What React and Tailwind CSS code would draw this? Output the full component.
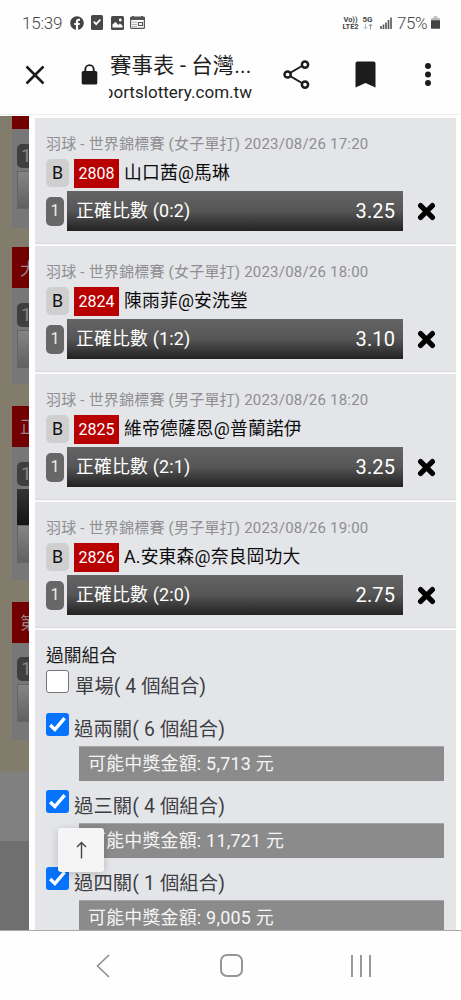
import React from "react";
import { FaFacebook } from "react-icons/fa";

const bets = [
  {
    title: "羽球 - 世界錦標賽 (女子單打) 2023/08/26 17:20",
    code: "2808",
    teams: "山口茜@馬琳",
    pick: "正確比數 (0:2)",
    odds: "3.25",
  },
  {
    title: "羽球 - 世界錦標賽 (女子單打) 2023/08/26 18:00",
    code: "2824",
    teams: "陳雨菲@安洗瑩",
    pick: "正確比數 (1:2)",
    odds: "3.10",
  },
  {
    title: "羽球 - 世界錦標賽 (男子單打) 2023/08/26 18:20",
    code: "2825",
    teams: "維帝德薩恩@普蘭諾伊",
    pick: "正確比數 (2:1)",
    odds: "3.25",
  },
  {
    title: "羽球 - 世界錦標賽 (男子單打) 2023/08/26 19:00",
    code: "2826",
    teams: "A.安東森@奈良岡功大",
    pick: "正確比數 (2:0)",
    odds: "2.75",
  },
];

const combos = [
  { label: "過兩關( 6 個組合)", prize: "可能中獎金額: 5,713 元" },
  { label: "過三關( 4 個組合)", prize: "可能中獎金額: 11,721 元" },
  { label: "過四關( 1 個組合)", prize: "可能中獎金額: 9,005 元" },
];

function StatusBar() {
  return (
    <div className="flex h-[45px] items-center pl-[22px] pr-[21px] text-[#454545]">
      <span className="w-[48px] text-[17px] font-light leading-5 tracking-[-0.2px]">15:39</span>
      <FaFacebook size={14} color="#444" />
      <svg className="ml-[7px]" width="12" height="15" viewBox="0 0 12 15">
        <rect width="12" height="15" rx="1.5" fill="#484848" />
        <path d="M2.8 6.6l2.4 2.5 4.2-4.6" stroke="#fff" strokeWidth="1.8" fill="none" />
      </svg>
      <svg className="ml-2" width="13" height="14" viewBox="0 0 13 14">
        <rect width="13" height="14" rx="1.5" fill="#484848" />
        <path d="M1.5 11.5V8.5l3-2.6 2.8 3 1.6-1.5 2.6 2v2.1z" fill="#fff" />
        <circle cx="9.3" cy="4" r="1.4" fill="#fff" />
      </svg>
      <svg className="ml-[6px]" width="15" height="13" viewBox="0 0 15 13">
        <rect x="0.6" y="1.2" width="13.8" height="11.2" rx="1" fill="#fff" stroke="#555" strokeWidth="1.2" />
        <path d="M0 1h15v3H0zM2 0h2v2H2zM11 0h2v2h-2z" fill="#555" />
        <path d="M2 6.2h5M2 8.4h5M2 10.4h5" stroke="#aaa" />
        <path d="M8.5 6.5h4v3h-4z" fill="#fff" stroke="#555" strokeWidth="1.2" />
      </svg>
      <div className="ml-auto flex items-center">
        <div className="w-[19px] text-center text-[7.5px] font-bold leading-[7px] tracking-[-0.1px]">
          <div>Vo))</div>
          <div>LTE2</div>
        </div>
        <div className="mx-[1px] w-[13px] text-center text-[8px] font-bold leading-[7px]">
          <div>5G</div>
          <svg className="mx-auto" width="10" height="7" viewBox="0 0 10 7">
            <path d="M2.5 0.5v5M0.8 4l1.7 2 1.7-2" stroke="#bbb" fill="none" />
            <path d="M7.5 6.5v-5M5.8 3l1.7-2 1.7 2" stroke="#999" fill="none" />
          </svg>
        </div>
        <svg className="ml-[5px]" width="12" height="12" viewBox="0 0 12 12">
          <path d="M1 12V9M3.5 12V7.5M6 12V5.5M8.5 12V3M11 12V0.5" stroke="#555" strokeWidth="1.6" />
        </svg>
        <span className="ml-[5px] w-[34px] text-[17px] font-light leading-5 tracking-[-0.4px]">75%</span>
        <svg width="9" height="13" viewBox="0 0 10 14">
          <path d="M3 0h4v2h2a1 1 0 0 1 1 1v2H0V3a1 1 0 0 1 1-1h2z" fill="#bbb" />
          <path d="M0 4.5h10V13a1 1 0 0 1-1 1H1a1 1 0 0 1-1-1z" fill="#444" />
        </svg>
      </div>
    </div>
  );
}

function Toolbar() {
  return (
    <div className="flex h-[70px] items-start border-b border-[#eee] text-[#1f1f1f]">
      <svg className="ml-[25px] mt-5" width="20" height="20" viewBox="0 0 20 20">
        <path d="M1.5 1.5l17 17M18.5 1.5l-17 17" stroke="#1c1c1c" strokeWidth="2.5" />
      </svg>
      <svg className="ml-[36px] mt-[19px]" width="17" height="21" viewBox="0 0 17 21">
        <rect x="0.7" y="7" width="15.6" height="13.5" rx="1.6" fill="#1c1c1c" />
        <path d="M4.3 8V5.3a4.2 4.2 0 0 1 8.4 0V8" stroke="#1c1c1c" strokeWidth="1.9" fill="none" />
      </svg>
      <div className="ml-[11px] mt-[9px] flex w-[144px] flex-col">
        <span className="ml-[1px] whitespace-nowrap text-[21.4px] leading-6 tracking-[0.1px]">
          賽事表 - 台灣...
        </span>
        <div className="mt-[2px] flex w-[143px] justify-end overflow-hidden">
          <span className="whitespace-nowrap text-[17px] leading-6 tracking-[0.03px]">
            sportslottery.com.tw
          </span>
        </div>
      </div>
      <svg className="ml-[30px] mt-[15px]" width="28" height="30" viewBox="0 0 28 30">
        <path d="M21.5 4.5L4.5 14.5l17 10" stroke="#1c1c1c" strokeWidth="2" fill="none" />
        <circle cx="22" cy="4.6" r="3.1" fill="#fff" stroke="#1c1c1c" strokeWidth="2.5" />
        <circle cx="4.6" cy="14.5" r="3.1" fill="#fff" stroke="#1c1c1c" strokeWidth="2.5" />
        <circle cx="22" cy="24.6" r="3.1" fill="#fff" stroke="#1c1c1c" strokeWidth="2.5" />
      </svg>
      <svg className="ml-[44px] mt-4" width="21" height="27" viewBox="0 0 21 27">
        <path d="M2.5 0.5h16a2 2 0 0 1 2 2v24L10.5 22 0.5 26.5v-24a2 2 0 0 1 2-2z" fill="#1c1c1c" />
      </svg>
      <svg className="ml-[48px] mt-[17px]" width="8" height="25" viewBox="0 0 8 25">
        <circle cx="4" cy="4" r="3" fill="#1c1c1c" />
        <circle cx="4" cy="12.5" r="3" fill="#1c1c1c" />
        <circle cx="4" cy="21" r="3" fill="#1c1c1c" />
      </svg>
    </div>
  );
}

function Badge() {
  return (
    <div className="ml-[5px] h-6 w-5 shrink-0 rounded-[5px] bg-[#3f3f3f] pl-[4px] text-[19px] leading-6 text-[#858585]">
      1
    </div>
  );
}

function Light({ className }) {
  return (
    <div
      className={`ml-[5px] w-5 shrink-0 border border-[#656565] bg-linear-to-b from-[#858585] to-[#616161] ${className}`}
    />
  );
}

// dimmed page behind the drawer
function Backdrop() {
  return (
    <div className="flex h-full w-[29px] shrink-0 flex-col overflow-hidden bg-[#817c6b]">
      <div className="ml-3 flex h-[656px] w-[17px] shrink-0 flex-col overflow-hidden">
        <div className="h-[13px] shrink-0 bg-[#720000]" />
        <div className="mb-[19px] flex h-[99px] shrink-0 flex-col bg-[#777] pt-[15px]">
          <Badge />
          <Light className="mt-[3px] h-[38px]" />
        </div>
        <div className="h-[41px] shrink-0 whitespace-nowrap bg-[#720000] pl-[8px] text-[17.6px] leading-[44px] text-[#9a8585]">
          大
        </div>
        <div className="mb-[22px] flex h-[96px] shrink-0 flex-col bg-[#777] pt-[15px]">
          <Badge />
          <Light className="mt-[3px] h-[38px]" />
        </div>
        <div className="h-[41px] shrink-0 whitespace-nowrap bg-[#720000] pl-[8px] text-[17.6px] leading-[42px] text-[#9a8585]">
          正
        </div>
        <div className="mb-[22px] flex h-[133px] shrink-0 flex-col bg-[#777] pt-[15px]">
          <Badge />
          <div className="ml-[5px] mt-[3px] h-[36px] w-5 bg-linear-to-b from-[#343434] to-[#151515]" />
          <Light className="h-[38px]" />
        </div>
        <div className="h-[41px] shrink-0 whitespace-nowrap bg-[#720000] pl-[8px] text-[17.6px] leading-[42px] text-[#9a8585]">
          第
        </div>
        <div className="flex h-[97px] shrink-0 flex-col bg-[#777] pt-[14px]">
          <Badge />
          <Light className="mt-[3px] h-[38px]" />
        </div>
      </div>
      <div className="h-[69px] shrink-0 bg-[#808080]" />
      <div className="h-[90px] shrink-0 bg-[#6f6f6f]" />
    </div>
  );
}

function Bet({ bet }) {
  return (
    <div className="h-[128px] w-[421px] shrink-0 border-b-2 border-[#fbfbfb] pl-[11px] pt-[15px] shadow-[inset_0_-1px_0_#dadadc]">
      <div className="h-[25px] whitespace-nowrap text-[15px] leading-[22px] tracking-[0.21px] text-[#8e8e90]">
        {bet.title}
      </div>
      <div className="flex h-[29px] items-center">
        <span className="h-[28px] w-[23px] rounded-[5px] bg-[#cfcfcf] pl-[6px] text-[17.8px] leading-[28px] text-[#111]">
          B
        </span>
        <span className="ml-[5px] mt-[1px] h-[29px] w-[45px] bg-[#b80000] text-center text-[16px] leading-[29px] text-white">
          {bet.code}
        </span>
        <span className="ml-[5px] whitespace-nowrap text-[17.8px] leading-[28px] tracking-[0.18px] text-[#0c0c0c]">
          {bet.teams}
        </span>
      </div>
      <div className="mt-[4px] flex h-[40px] items-center">
        <span className="h-[29px] w-[18px] rounded-[5px] bg-[#676767] text-center text-[16px] leading-[28px] text-[#eee]">
          1
        </span>
        <div className="ml-[3px] flex h-[40px] w-[336px] items-center justify-between bg-linear-to-b from-[#646464] via-[#565656] to-[#222] pl-[9px] pr-[8px] text-white">
          <span className="text-[17.9px] tracking-[0.15px]">{bet.pick}</span>
          <span className="text-[20px] tracking-[0.1px]">{bet.odds}</span>
        </div>
        <svg className="ml-[14px]" width="19" height="19" viewBox="0 0 19 19">
          <path d="M3.6 3.6l11.8 11.8M15.4 3.6L3.6 15.4" stroke="#000" strokeWidth="5.2" strokeLinecap="round" />
        </svg>
      </div>
    </div>
  );
}

function Combo({ combo }) {
  return (
    <div className="h-[77.2px] shrink-0 pl-[11px]">
      <div className="flex h-[33px] items-start">
        <svg className="shrink-0" width="23" height="23" viewBox="0 0 23 23">
          <rect width="23" height="23" rx="3" fill="#0573fb" />
          <path d="M4.2 12l4.7 4.6L18.6 5.2" stroke="#fff" strokeWidth="3.4" fill="none" />
        </svg>
        <span className="ml-[5px] mt-[3px] whitespace-nowrap text-[19.3px] leading-[28px] tracking-[0.15px] text-[#3c3e42]">
          {combo.label}
        </span>
      </div>
      <div className="ml-[33px] h-[35px] w-[365px] whitespace-nowrap border-t border-[#a5a5a5] bg-[#8b8b8b] pl-[9px] text-[17.9px] leading-[33px] tracking-[0.25px] text-[#f5f5f5]">
        {combo.prize}
      </div>
    </div>
  );
}

function App() {
  return (
    <div className="h-[1000px] w-[461px] overflow-hidden bg-[#fefefe] font-['Roboto','Noto_Sans_CJK_TC',sans-serif]">
      <StatusBar />
      <Toolbar />
      <div className="relative flex h-[816px] overflow-hidden border-b border-[#aaa] pt-[1px]">
        <Backdrop />
        <div className="ml-[6px] mt-[2px] flex w-[421px] shrink-0 flex-col overflow-hidden bg-[#e4e5e9] bg-[linear-gradient(to_right,#e4e5e9_414px,#e5e5e5_414px)]">
          {bets.map((bet) => (
            <Bet key={bet.code} bet={bet} />
          ))}
          <div className="h-[83px] shrink-0 pl-[11px] pt-[13px]">
            <div className="text-[17.8px] leading-[26px] text-[#1a1a1a]">過關組合</div>
            <div className="mt-[1px] flex items-start">
              <div className="h-[23px] w-[23px] rounded-[3px] border border-[#767676] bg-white" />
              <span className="ml-[6px] mt-[3px] whitespace-nowrap text-[19.3px] leading-[28px] tracking-[0.1px] text-[#3c3e42]">
                單場( 4 個組合)
              </span>
            </div>
          </div>
          {combos.map((combo) => (
            <Combo key={combo.label} combo={combo} />
          ))}
        </div>
        <button className="absolute left-[58px] top-[713px] flex h-[44px] w-[46px] items-center justify-center rounded-[3px] bg-[#f5f5f5] shadow-[0_2px_8px_rgba(0,0,0,0.18)]">
          <svg width="11" height="18" viewBox="0 0 11 18">
            <path d="M5.5 17.5V1.5M1 6l4.5-4.5L10 6" stroke="#444" strokeWidth="1.4" fill="none" />
          </svg>
        </button>
      </div>
      <div className="flex h-[69px] items-center">
        <svg className="ml-[96px]" width="14" height="24" viewBox="0 0 14 24">
          <path d="M13 1L1.5 12 13 23" stroke="#8f8f8f" strokeWidth="1.6" fill="none" />
        </svg>
        <div className="ml-[110px] h-[23px] w-[23px] rounded-[7px] border-2 border-[#969696]" />
        <svg className="ml-[107px]" width="22" height="22" viewBox="0 0 22 22">
          <path d="M2 0v22M11 0v22M20 0v22" stroke="#8f8f8f" strokeWidth="1.8" />
        </svg>
      </div>
    </div>
  );
}

export default App;
